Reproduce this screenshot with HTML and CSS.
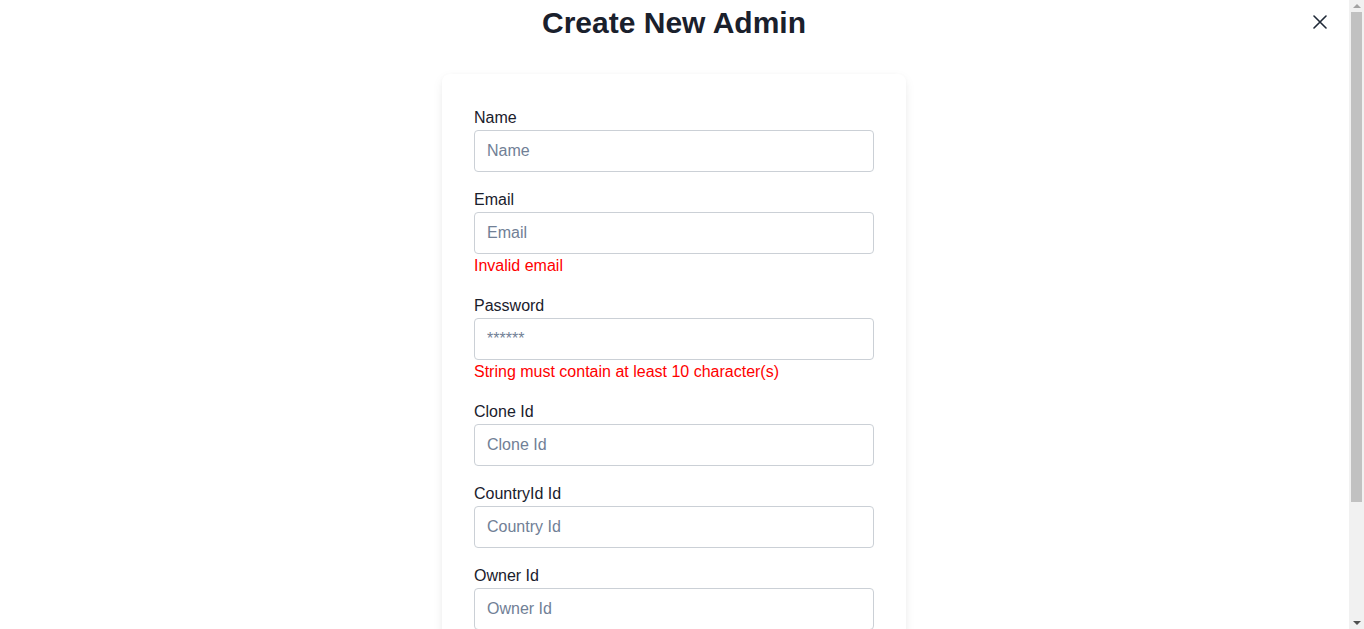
FILE: index.html
```html
<!DOCTYPE html>
<html lang="en">
<head>
<meta charset="utf-8">
<title>Create New Admin</title>
<link rel="stylesheet" href="styles.css">
</head>
<body>
<div class="page">
  <header class="header">
    <h1 class="title">Create New Admin</h1>
    <button class="close" type="button" aria-label="Close">
      <svg width="14" height="14" viewBox="0 0 14 14"><path d="M1 1L13 13M13 1L1 13" stroke="#1f2937" stroke-width="1.6" stroke-linecap="round"/></svg>
    </button>
  </header>
  <form class="card">
    <div class="field">
      <label class="label">Name</label>
      <input class="input" placeholder="Name">
    </div>
    <div class="field">
      <label class="label">Email</label>
      <input class="input" placeholder="Email">
      <p class="error">Invalid email</p>
    </div>
    <div class="field">
      <label class="label">Password</label>
      <input class="input" type="password" placeholder="******">
      <p class="error">String must contain at least 10 character(s)</p>
    </div>
    <div class="field">
      <label class="label">Clone Id</label>
      <input class="input" placeholder="Clone Id">
    </div>
    <div class="field">
      <label class="label">CountryId Id</label>
      <input class="input" placeholder="Country Id">
    </div>
    <div class="field">
      <label class="label">Owner Id</label>
      <input class="input" placeholder="Owner Id">
    </div>
    <button class="submit" type="button">Create</button>
  </form>
</div>
<div class="scrollbar" aria-hidden="true">
  <div class="arrow arrow-up"></div>
  <div class="track"><div class="thumb"></div></div>
  <div class="arrow arrow-down"></div>
</div>
</body>
</html>
```

FILE: styles.css
```css
html, body {
  margin: 0;
  padding: 0;
  background: #ffffff;
  font-family: "Liberation Sans", Arial, sans-serif;
  color: #1a202c;
}
.page {
  margin-right: 16px;
  padding-bottom: 40px;
}
.header {
  position: relative;
  height: 40px;
}
.title {
  margin: 0;
  text-align: center;
  font-size: 30px;
  line-height: 46px;
  font-weight: 700;
  color: #1a202c;
}
.close {
  position: absolute;
  top: 15px;
  right: 21px;
  width: 14px;
  height: 14px;
  padding: 0;
  border: 0;
  background: none;
  display: flex;
  cursor: pointer;
}
.card {
  width: 400px;
  margin: 34px auto 0;
  padding: 32px;
  background: #fff;
  border-radius: 8px;
  box-shadow: 0 4px 12px rgba(0,0,0,0.06), 0 1px 4px rgba(0,0,0,0.03);
  display: flex;
  flex-direction: column;
  gap: 16px;
}
.field {
  display: flex;
  flex-direction: column;
}
.label {
  font-size: 16px;
  line-height: 24px;
  color: #1a202c;
}
.input {
  box-sizing: border-box;
  width: 100%;
  height: 42px;
  padding: 0 12px;
  border: 1px solid #cbd0d6;
  border-radius: 4px;
  font-family: inherit;
  font-size: 16px;
  color: #1a202c;
  outline: none;
}
.input::placeholder {
  color: #718096;
}
.error {
  margin: 0;
  font-size: 16px;
  line-height: 24px;
  color: #ff0000;
}
.submit {
  height: 40px;
  border: 0;
  border-radius: 4px;
  background: #2563eb;
  color: #fff;
  font-family: inherit;
  font-size: 16px;
}

/* simulated browser scrollbar */
.scrollbar {
  position: fixed;
  top: 0;
  right: 0;
  bottom: 0;
  width: 15px;
  background: #f1f1f1;
  display: flex;
  flex-direction: column;
}
.arrow {
  height: 12px;
  flex: none;
  display: flex;
  justify-content: center;
  align-items: center;
}
.arrow::before {
  content: "";
  width: 0;
  height: 0;
  border-left: 4px solid transparent;
  border-right: 4px solid transparent;
}
.arrow-up::before {
  border-bottom: 4px solid #a3a3a3;
}
.arrow-down::before {
  border-top: 4px solid #505050;
}
.track {
  flex: 1;
  padding: 0 2px;
}
.thumb {
  height: 490px;
  background: #c1c1c1;
}
```
